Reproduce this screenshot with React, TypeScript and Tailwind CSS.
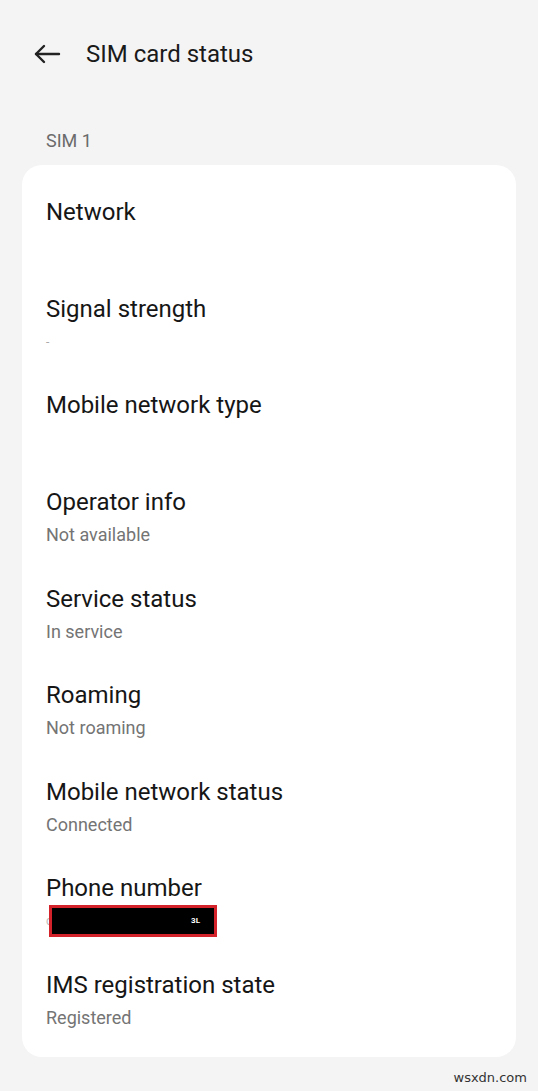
import React from "react"

const ROWS = [
  { title: "Network", value: "" },
  { title: "Signal strength", value: "-" },
  { title: "Mobile network type", value: "" },
  { title: "Operator info", value: "Not available" },
  { title: "Service status", value: "In service" },
  { title: "Roaming", value: "Not roaming" },
  { title: "Mobile network status", value: "Connected" },
  { title: "Phone number", value: "__redacted__" },
  { title: "IMS registration state", value: "Registered" },
]

function BackArrow() {
  return (
    <svg width="28" height="22" viewBox="0 0 28 22" fill="none" stroke="#222" strokeWidth="2.4" strokeLinecap="round" strokeLinejoin="round">
      <path d="M26 11H3" />
      <path d="M11 3L3 11l8 8" />
    </svg>
  )
}

export default function App() {
  return (
    <div
      className="relative w-[538px] h-[1091px] bg-[#f4f4f4] overflow-hidden"
      style={{ fontFamily: "Roboto, 'Noto Sans', sans-serif" }}
    >
      {/* Top bar */}
      <div className="flex items-center h-[40px] mt-[34px] pl-[33px]">
        <BackArrow />
        <span className="ml-[25px] text-[24px] leading-[30px] text-[#1a1a1a]">SIM card status</span>
      </div>

      <div className="mt-[55px] pl-[46px] text-[18px] leading-[24px] text-[#6b6b6b]">SIM 1</div>

      {/* Card */}
      <div className="mx-[22px] mt-[12px] bg-white rounded-[20px] pt-[14px] pb-[9px]">
        {ROWS.map((row) => (
          <div key={row.title} className="px-[24px] py-[18.3px] flex flex-col gap-[6px]">
            <div className="text-[24px] leading-[30px] text-[#161616]">{row.title}</div>
            <div className="h-[24px] text-[18px] leading-[24px] text-[#747474] flex items-center">
              {row.value === "__redacted__" ? (
                <div className="flex items-center">
                  <span className="text-[#bbb] text-[12px] w-[3px]">c</span>
                  <div className="relative w-[168px] h-[32px] bg-black border-[3px] border-[#d3222a]">
                    <span className="absolute right-[14px] top-[1px] text-[8px] font-bold text-white">3L</span>
                  </div>
                </div>
              ) : row.value === "-" ? (
                <span className="text-[#aaa] text-[12px]">-</span>
              ) : (
                row.value
              )}
            </div>
          </div>
        ))}
      </div>

      <div className="absolute right-[11px] bottom-[4px] text-[13px] text-[#333]" style={{ fontFamily: "'DejaVu Sans', sans-serif" }}>
        wsxdn.com
      </div>
    </div>
  )
}
